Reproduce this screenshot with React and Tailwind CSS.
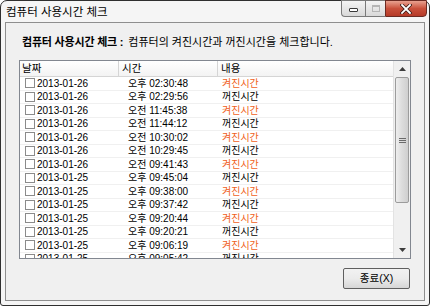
import React from "react";

const rows = [
  ["2013-01-26", "오후 02:30:48", true],
  ["2013-01-26", "오후 02:29:56", false],
  ["2013-01-26", "오전 11:45:38", true],
  ["2013-01-26", "오전 11:44:12", false],
  ["2013-01-26", "오전 10:30:02", true],
  ["2013-01-26", "오전 10:29:45", false],
  ["2013-01-26", "오전 09:41:43", true],
  ["2013-01-25", "오후 09:45:04", false],
  ["2013-01-25", "오후 09:38:00", true],
  ["2013-01-25", "오후 09:37:42", false],
  ["2013-01-25", "오후 09:20:44", true],
  ["2013-01-25", "오후 09:20:21", false],
  ["2013-01-25", "오후 09:06:19", true],
  ["2013-01-25", "오후 09:05:42", false],
];

const font = { fontFamily: '"Liberation Sans", "Noto Sans CJK KR", sans-serif' };

function TitleButtons() {
  return (
    <div className="flex h-[17px] self-start -mt-px">
      {/* minimize */}
      <div className="w-[24px] h-full flex items-center justify-center border border-[#7a7a7a] border-r-0 rounded-bl-[4px] bg-gradient-to-b from-[#f4f4f4] to-[#d9d9d9]">
        <div className="w-[9px] h-[4px] border border-[#3a3a3a] bg-white rounded-[1px] mt-[3px]" />
      </div>
      {/* maximize (disabled) */}
      <div className="w-[20px] h-full flex items-center justify-center border border-[#7a7a7a] border-r-0 bg-gradient-to-b from-[#f4f4f4] to-[#d9d9d9]">
        <div className="w-[8px] h-[7px] border border-[#b5b5b5] border-t-2" />
      </div>
      {/* close */}
      <div className="w-[42px] h-full flex items-center justify-center border border-[#6b2a22] rounded-br-[4px] bg-gradient-to-b from-[#e8a190] via-[#c9503b] to-[#b53a28]">
        <svg width="12" height="10" viewBox="0 0 12 10">
          <path d="M2 1 L10 9 M10 1 L2 9" stroke="#3b1a14" strokeWidth="3.4" strokeLinecap="square" />
          <path d="M2 1 L10 9 M10 1 L2 9" stroke="#ffffff" strokeWidth="1.8" strokeLinecap="square" />
        </svg>
      </div>
    </div>
  );
}

function ScrollBar() {
  return (
    <div className="w-[17px] h-full flex flex-col bg-[#f0f0f0] border-l border-[#e3e3e3]">
      <div className="h-[16px] flex items-center justify-center">
        <svg width="7" height="4" viewBox="0 0 7 4"><path d="M0 4 L3.5 0 L7 4 Z" fill="#3c3c3c" /></svg>
      </div>
      <div className="mx-[1px] h-[126px] rounded-[2px] border border-[#9c9c9c] bg-gradient-to-r from-[#eeeeee] via-[#dcdcdc] to-[#cfcfcf] flex items-center justify-center">
        <div className="flex flex-col gap-[1px]">
          <div className="w-[7px] h-px bg-[#6a6a6a]" />
          <div className="w-[7px] h-px bg-[#6a6a6a]" />
          <div className="w-[7px] h-px bg-[#6a6a6a]" />
        </div>
      </div>
      <div className="flex-1" />
      <div className="h-[16px] flex items-center justify-center">
        <svg width="7" height="4" viewBox="0 0 7 4"><path d="M0 0 L3.5 4 L7 0 Z" fill="#3c3c3c" /></svg>
      </div>
    </div>
  );
}

export default function App() {
  return (
    <div className="w-[430px] h-[306px] bg-white overflow-hidden" style={font}>
      <div className="w-full h-full flex flex-col rounded-t-[7px] rounded-b-[3px] border border-[#2f2f2f] bg-[#f5f5f5]">
        {/* Title bar */}
        <div className="h-[21px] flex items-start justify-between pl-[5px] pr-[2px]">
          <span className="text-[11.5px] text-black leading-none pt-[6px]">컴퓨터 사용시간 체크</span>
          <TitleButtons />
        </div>

        {/* Client */}
        <div className="flex-1 mx-[4px] mb-[4px] border border-[#8e8e8e] bg-[#f0f0f0] flex flex-col pl-[13px] pr-[13px]">
          <div className="h-[37px] flex items-center pl-[3px] pt-[2px] text-[11px] text-black">
            <span className="font-bold tracking-[-0.2px]">컴퓨터 사용시간 체크 :</span>
            <span className="ml-[5px]">컴퓨터의 켜진시간과 꺼진시간을 체크합니다.</span>
          </div>

          {/* List */}
          <div className="h-[199px] border border-[#828790] bg-white flex">
            <div className="flex-1 flex flex-col overflow-hidden">
              <div className="h-[16px] flex border-b border-[#d5d5d5] bg-gradient-to-b from-white to-[#f3f3f3] text-[10.5px] text-black">
                <div className="w-[99px] pl-[2px] border-r border-[#d5d5d5] flex items-center">날짜</div>
                <div className="w-[99px] pl-[3px] border-r border-[#d5d5d5] flex items-center">시간</div>
                <div className="flex-1 pl-[3px] flex items-center">내용</div>
              </div>
              {rows.map(([d, t, on], i) => (
                <div key={i} className="h-[13.5px] shrink-0 flex items-center border-b border-[#f0f0f0] text-[10px] text-black">
                  <div className="w-[99px] pl-[5px] flex items-center">
                    <div className="w-[10px] h-[10px] border border-[#8b8b8b] bg-white mr-[2px]" />
                    <span>{d}</span>
                  </div>
                  <div className="w-[99px] pl-[9px]">{t}</div>
                  <div className={"flex-1 pl-[4px] text-[10px] " + (on ? "text-[#f0601a]" : "text-black")}>
                    {on ? "켜진시간" : "꺼진시간"}
                  </div>
                </div>
              ))}
            </div>
            <ScrollBar />
          </div>

          {/* Buttons */}
          <div className="flex-1 flex items-start justify-end pt-[9px] pr-[1px]">
            <button className="w-[67px] h-[21px] rounded-[2px] border border-[#5f5f5f] bg-gradient-to-b from-[#f2f2f2] via-[#ebebeb] to-[#d6d6d6] text-[10.5px] text-black leading-none">
              종료(X)
            </button>
          </div>
        </div>
      </div>
    </div>
  );
}
